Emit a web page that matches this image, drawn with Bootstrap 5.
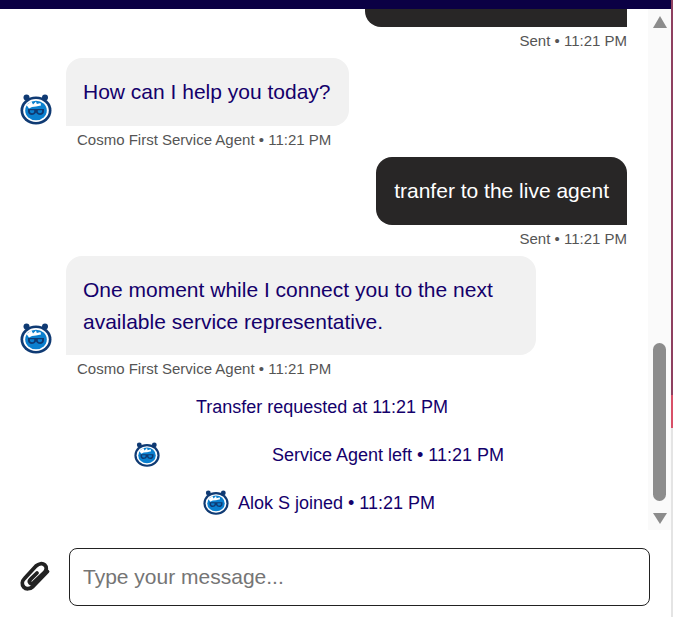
<!DOCTYPE html>
<html lang="en">
<head>
    <meta charset="UTF-8">
    <meta name="viewport" content="width=device-width, initial-scale=1.0">
    <title>Chat</title>
    <link href="https://cdn.jsdelivr.net/npm/bootstrap@5.3.0/dist/css/bootstrap.min.css" rel="stylesheet">
    <style>
        html, body { height: 617px; overflow: hidden; }
        body { font-family: "Liberation Sans", Arial, sans-serif; background: #fff; }
        .page-wrap { height: 617px; }
        .chat-col { width: 671px; }
        .edge-strip { width: 2px; background: linear-gradient(#8e4060 0 395px, #d85068 395px 428px, #e4e4e4 428px); }
        .top-strip { height: 9px; background: #0b0044; }
        .chat-mid { height: 521px; }
        .chat-scroll { width: 648px; overflow: hidden; }
        .msg-bubble { font-size: 21px; line-height: 32px; padding: 18px; border-radius: 16px; }
        .bubble-in { background: #f1f1f1; color: #14006b; border-bottom-left-radius: 0; padding-left: 17px; }
        .bubble-out { background: #282626; color: #fff; border-bottom-right-radius: 0; }
        .bubble-cut { width: 262px; height: 18px; padding: 0; margin-right: 21px; border-radius: 0 0 0 16px; }
        .bubble-wide { width: 470px; padding-bottom: 17px; }
        .msg-gap { margin-top: 7px; }
        .meta-line { font-size: 15px; line-height: 20px; color: #555; margin-top: 4px; }
        .meta-out { margin-right: 21px; }
        .meta-in { margin-left: 77px; }
        .avatar-big { width: 32px; height: 32px; margin-left: 20px; margin-right: 14px; }
        .avatar-small { width: 26px; height: 26px; }
        .event-line { font-size: 18px; line-height: 26px; color: #14006b; height: 26px; margin-top: 22px; padding-right: 10px; }
        .event-first { margin-top: 15px; padding-right: 4px; }
        .agent-gap { width: 112px; }
        .alok-gap { width: 9px; }
        .scroll-track { width: 23px; background: #fafafa; }
        .scroll-up { width: 0; height: 0; border-left: 7.5px solid transparent; border-right: 7.5px solid transparent; border-bottom: 12px solid #8c8c8c; margin-top: 7px; }
        .scroll-thumb { width: 13px; height: 158px; background: #8c8c8c; border-radius: 7px; margin-top: 315px; }
        .scroll-down { width: 0; height: 0; border-left: 7.5px solid transparent; border-right: 7.5px solid transparent; border-top: 11px solid #8c8c8c; margin-top: 12px; }
        .input-row { padding-top: 18px; }
        .clip-icon { width: 32px; height: 32px; margin-left: 20px; margin-right: 17px; }
        .msg-input { width: 581px; height: 58px; border: 1px solid #222; border-radius: 8px; font-size: 21px; padding: 0 13px; color: #222; font-family: "Liberation Sans", Arial, sans-serif; outline: none; }
        .msg-input::placeholder { color: #757575; opacity: 1; }
    </style>
</head>
<body>
    <svg width="0" height="0" class="position-absolute">
        <symbol id="cosmo" viewBox="0 0 32 32">
            <circle cx="6.500" cy="3.600" r="3" fill="#0f3a73"/>
            <circle cx="25" cy="3.600" r="3" fill="#0f3a73"/>
            <ellipse cx="16" cy="16.500" rx="15.500" ry="14" fill="#0f3a73"/>
            <ellipse cx="16" cy="16.500" rx="12.800" ry="11.400" fill="#fff"/>
            <ellipse cx="16" cy="16.500" rx="10.800" ry="9.800" fill="#0b80cf"/>
            <path d="M6.500 11l5-3.500 1.500 3 3-3 .8 2.500 3.700-1 .5 2.500-5 1-4 .5-3 1.500z" fill="#fff"/>
            <path d="M8 15h16v2.500c0 2.200-1.800 3.500-3.800 3.500-2.200 0-3.200-1.200-4.200-2.500-1 1.300-2 2.500-4.200 2.500-2 0-3.800-1.300-3.800-3.500z" fill="#0f3a73"/>
            <path d="M10 16.200h4.200v1.300c0 1-1 1.700-2.100 1.700s-2.100-.7-2.100-1.700zM17.800 16.200H22v1.300c0 1-1 1.700-2.100 1.700s-2.100-.7-2.100-1.700z" fill="#0b80cf"/>
        </symbol>
    </svg>
    <div class="page-wrap d-flex">
        <div class="chat-col d-flex flex-column">
            <div class="top-strip"></div>
            <div class="chat-mid d-flex">
                <div class="chat-scroll">
                    <div class="d-flex justify-content-end">
                        <div class="msg-bubble bubble-out bubble-cut"></div>
                    </div>
                    <div class="meta-line meta-out text-end">Sent • 11:21 PM</div>

                    <div class="d-flex align-items-end msg-gap">
                        <svg class="avatar-big flex-shrink-0"><use href="#cosmo"/></svg>
                        <div class="msg-bubble bubble-in">How can I help you today?</div>
                    </div>
                    <div class="meta-line meta-in">Cosmo First Service Agent • 11:21 PM</div>

                    <div class="d-flex justify-content-end msg-gap">
                        <div class="msg-bubble bubble-out meta-out">tranfer to the live agent</div>
                    </div>
                    <div class="meta-line meta-out text-end">Sent • 11:21 PM</div>

                    <div class="d-flex align-items-end msg-gap">
                        <svg class="avatar-big flex-shrink-0"><use href="#cosmo"/></svg>
                        <div class="msg-bubble bubble-in bubble-wide">One moment while I connect you to the next available service representative.</div>
                    </div>
                    <div class="meta-line meta-in">Cosmo First Service Agent • 11:21 PM</div>

                    <div class="event-line event-first text-center">Transfer requested at 11:21 PM</div>
                    <div class="event-line d-flex justify-content-center align-items-center">
                        <svg class="avatar-small"><use href="#cosmo"/></svg>
                        <span class="agent-gap"></span>
                        <span>Service Agent left • 11:21 PM</span>
                    </div>
                    <div class="event-line d-flex justify-content-center align-items-center">
                        <svg class="avatar-small"><use href="#cosmo"/></svg>
                        <span class="alok-gap"></span>
                        <span>Alok S joined • 11:21 PM</span>
                    </div>
                </div>
                <div class="scroll-track d-flex flex-column align-items-center">
                    <div class="scroll-up"></div>
                    <div class="scroll-thumb"></div>
                    <div class="scroll-down"></div>
                </div>
            </div>
            <div class="d-flex align-items-center input-row">
                <svg class="clip-icon flex-shrink-0" viewBox="0 0 32 32" fill="none" stroke="#222" stroke-width="3.800" stroke-linecap="round" stroke-linejoin="round">
                    <path d="M27.500 10.500 13 25.500c-3 2.700-7 3-9.200.6s-1.900-6 .7-8.600L16 5c2.700-2.500 6.500-3.100 8.800-1s1.800 5.400-.6 7.700L13.800 21.500c-1.500 1.300-3 1.300-3.800.4s-.7-2.400.7-3.700L17 12"/>
                </svg>
                <input class="msg-input" type="text" placeholder="Type your message...">
            </div>
        </div>
        <div class="edge-strip"></div>
    </div>
</body>
</html>
